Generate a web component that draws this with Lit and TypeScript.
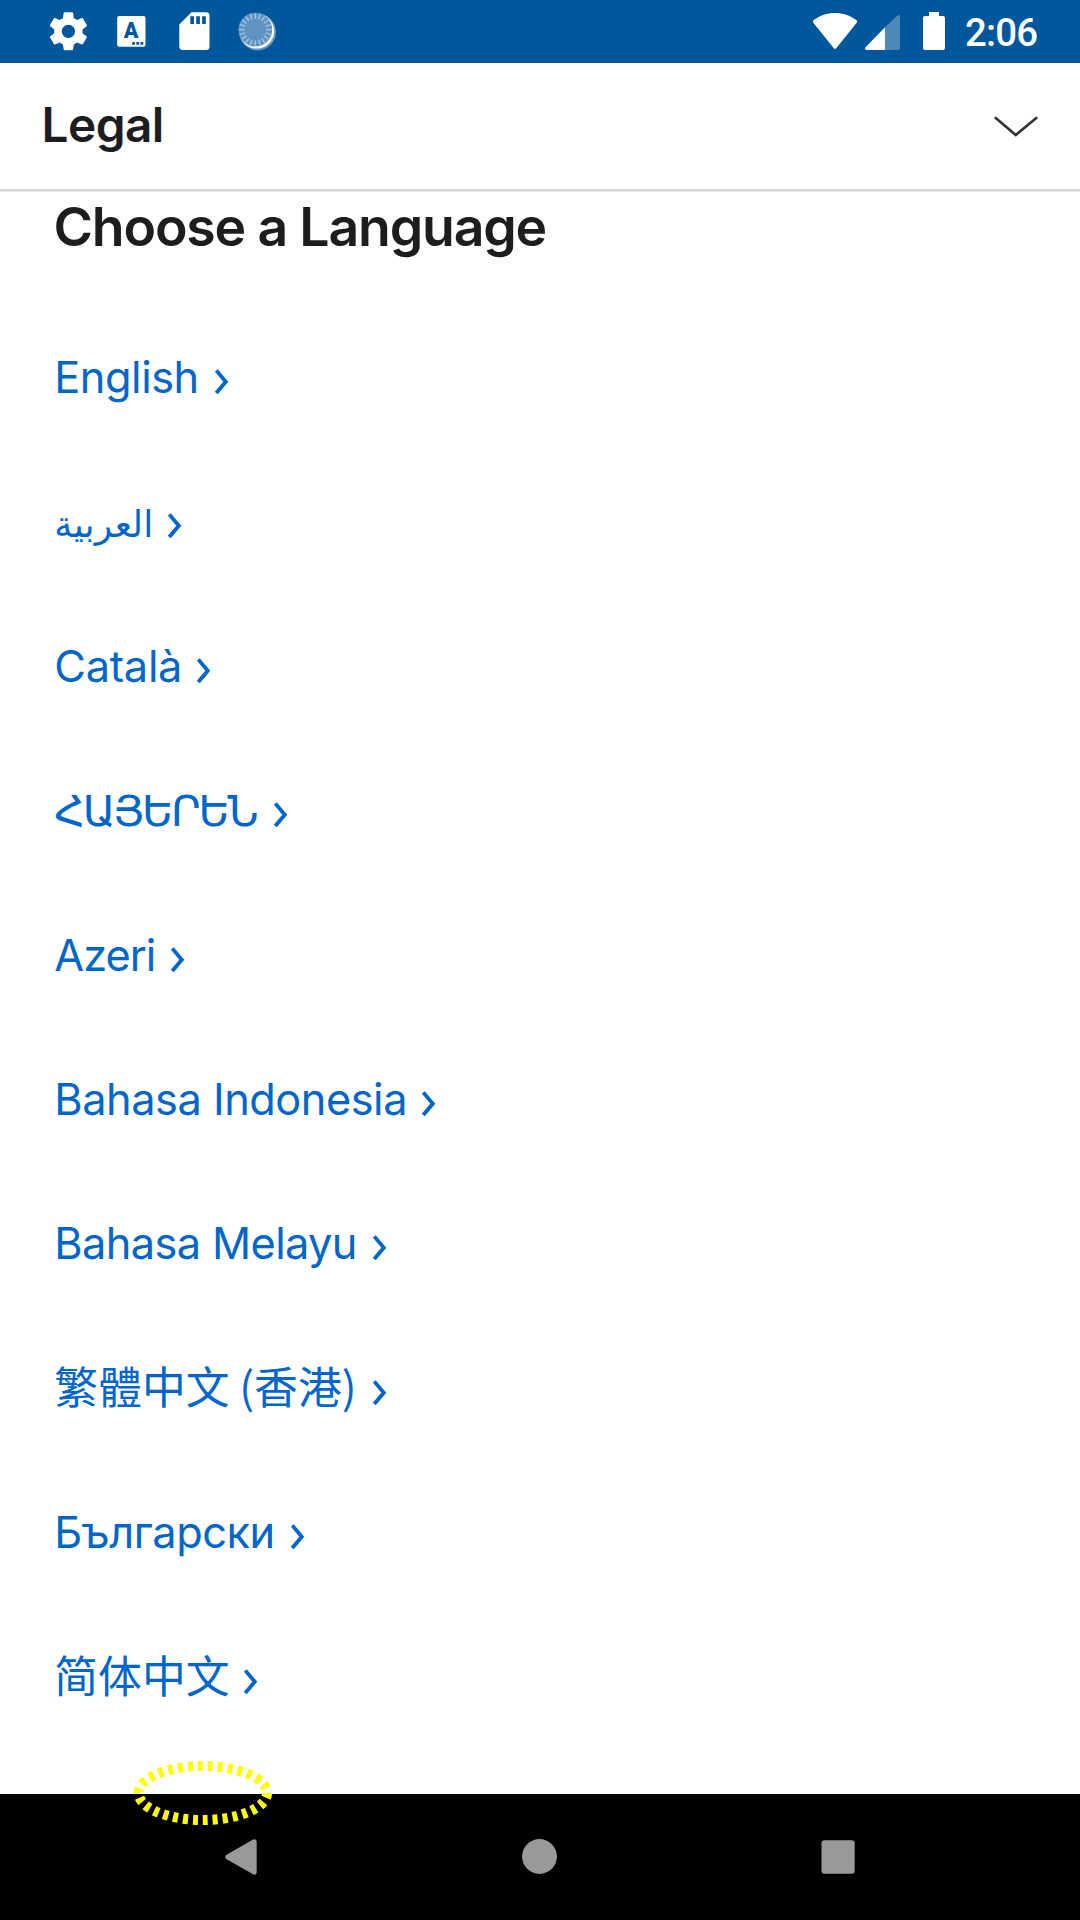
import { LitElement, html, svg, css } from "lit";
import { customElement, state } from "lit/decorators.js";
import { styleMap } from "lit/directives/style-map.js";

interface Language {
  label: string;
  lang: string;
  script: string;
  width: number;
  spacing: number;
}

const LANGUAGES: Language[] = [
  { label: "English", lang: "en", script: "latin", width: 146.7, spacing: -0.45 },
  { label: "العربية", lang: "ar", script: "arabic", width: 100, spacing: 0 },
  { label: "Català", lang: "ca", script: "latin", width: 128.7, spacing: -0.26 },
  { label: "ՀԱՅԵՐԵՆ", lang: "hy", script: "armenian", width: 205.4, spacing: -2.2 },
  { label: "Azeri", lang: "az", script: "latin", width: 103.2, spacing: -1 },
  { label: "Bahasa Indonesia", lang: "id", script: "latin", width: 353.7, spacing: -0.46 },
  { label: "Bahasa Melayu", lang: "ms", script: "latin", width: 304.4, spacing: -0.6 },
  { label: "繁體中文 (香港)", lang: "zh-HK", script: "traditional", width: 305, spacing: 0 },
  { label: "Български", lang: "bg", script: "latin", width: 222.7, spacing: -0.42 },
  { label: "简体中文", lang: "zh-CN", script: "simplified", width: 176.2, spacing: 0 },
];

@customElement("status-bar")
export class StatusBar extends LitElement {
  static styles = css`
    :host {
      display: block;
      height: 63px;
      background: #01579b;
    }
    .icons {
      display: block;
      width: 1080px;
      height: 63px;
    }
    .clock {
      font: 500 38.4px Roboto, sans-serif;
      fill: #fff;
    }
    .letter {
      font: 900 21.5px Roboto, sans-serif;
      fill: #01579b;
    }
  `;

  render() {
    const ticks = Array.from({ length: 20 }, (_, i) => i * 18);
    return html`
      <svg class="icons" viewBox="0 0 1080 63">
        <path
          transform="translate(45.6 8.5) scale(1.9)"
          fill="#fff"
          d="M19.43 12.98c.04-.32.07-.64.07-.98s-.03-.66-.07-.98l2.11-1.65c.19-.15.24-.42.12-.64l-2-3.46c-.12-.22-.39-.3-.61-.22l-2.49 1c-.52-.4-1.08-.73-1.69-.98l-.38-2.65C14.46 2.18 14.25 2 14 2h-4c-.25 0-.46.18-.49.42l-.38 2.65c-.61.25-1.17.59-1.69.98l-2.49-1c-.23-.09-.49 0-.61.22l-2 3.46c-.13.22-.07.49.12.64l2.11 1.65c-.04.32-.07.65-.07.98s.03.66.07.98l-2.11 1.65c-.19.15-.24.42-.12.64l2 3.46c.12.22.39.3.61.22l2.49-1c.52.4 1.08.73 1.69.98l.38 2.65c.03.24.24.42.49.42h4c.25 0 .46-.18.49-.42l.38-2.65c.61-.25 1.17-.59 1.69-.98l2.49 1c.23.09.49 0 .61-.22l2-3.46c.12-.22.07-.49-.12-.64l-2.11-1.65zM12 15.5c-1.93 0-3.5-1.57-3.5-3.5s1.57-3.5 3.5-3.5 3.5 1.57 3.5 3.5-1.57 3.5-3.5 3.5z"
        />
        <rect x="117.2" y="16" width="28.3" height="30.8" rx="2" fill="#fff" />
        <text class="letter" x="131.2" y="38.4" text-anchor="middle">A</text>
        <path fill="#01579b" d="M132.1 42h2.8v2.8h-2.8zM136.3 42h2.8v2.8h-2.8zM140.5 42h2.8v2.8h-2.8z" />
        <path
          fill="#fff"
          d="M191.5 12.3H206a3.5 3.5 0 0 1 3.5 3.5V46.6a3.5 3.5 0 0 1-3.5 3.5H182.8a3.5 3.5 0 0 1-3.5-3.5V24.5z"
        />
        <path fill="#01579b" d="M190.3 16.2h3.7v7.8h-3.7zM196.2 16.2h3.7v7.8h-3.7zM202.1 16.2h3.7v7.8h-3.7z" />
        <circle cx="257.6" cy="32" r="18.4" fill="#6699c5" />
        <circle cx="256.800" cy="31.200" r="17.4" fill="#fff" />
        <circle cx="255.3" cy="29.6" r="16.9" fill="#5f93c1" />
        ${ticks.map(
          (a) => svg`<path d="M255.3 13.4v5.400" stroke="#a3c2dc" stroke-width="1.5" transform="rotate(${a} 255.3 29.6)"/>`
        )}
        <path
          fill="#fff"
          d="M813.3 22.8q-1.2-1.5.4-2.8C820 15.4 827 13 835 13s15 2.4 21.3 7q1.6 1.3.4 2.8L836.4 48q-1.4 1.7-2.8 0z"
        />
        <path fill="#4d89b9" d="M885 27.200L897.2 15.7Q900 13.6 900 17V48q0 2-2 2H885z" />
        <path fill="#fff" d="M885 27.2V50H866.5q-2.5-.5-1-2.7z" />
        <path fill="#fff" d="M929 12h10v4h4q2 0 2 2V48q0 2-2 2H925q-2 0-2-2V18q0-2 2-2h4z" />
        <text class="clock" x="965" y="46.300" textLength="73" lengthAdjust="spacing">2:06</text>
      </svg>
    `;
  }
}

@customElement("legal-header")
export class LegalHeader extends LitElement {
  static styles = css`
    :host {
      box-sizing: border-box;
      height: 128px;
      padding: 0 42px 2px 41.5px;
      display: flex;
      align-items: center;
      justify-content: space-between;
      background: #fff;
      border-bottom: 2px solid #d6d6d6;
      box-shadow: 0 1px 0 #e6e6e6;
    }
    .title {
      font: 600 47.7px/60px Inter, sans-serif;
      letter-spacing: -0.5px;
      color: #1d1d1f;
    }
    .toggle {
      width: 44px;
      height: 22px;
      margin-top: 3px;
      fill: none;
      stroke: #333336;
      stroke-width: 2.7;
      stroke-linecap: round;
    }
  `;

  render() {
    return html`
      <span class="title">Legal</span>
      <svg class="toggle" viewBox="0 0 44 22"><path d="M1.7 2L21.8 19L42.3 2" /></svg>
    `;
  }
}

@customElement("language-link")
export class LanguageLink extends LitElement {
  static properties = { item: { attribute: false } };
  declare item: Language;

  static styles = css`
    :host {
      display: block;
      height: 144.4px;
      font: 43.3px/144.4px Inter, sans-serif;
      color: #0066cc;
      white-space: nowrap;
    }
    .label {
      display: inline-block;
      line-height: 1;
      text-align: left;
    }
    .arabic {
      font-family: "DejaVu Sans", sans-serif;
      font-size: 36.2px;
    }
    .armenian {
      font-family: "DejaVu Sans", sans-serif;
      font-size: 42.7px;
    }
    .traditional {
      font-family: "Noto Sans CJK TC", sans-serif;
      font-size: 43.8px;
    }
    .simplified {
      font-family: "Noto Sans CJK SC", sans-serif;
      font-size: 43.8px;
    }
    .more {
      width: 14px;
      height: 25px;
      margin-left: 14px;
      vertical-align: -1px;
      fill: none;
      stroke: currentColor;
      stroke-width: 3.8;
    }
  `;

  render() {
    const { label, lang, script, width, spacing } = this.item;
    return html`<bdi
        class="label ${script}"
        lang=${lang}
        style=${styleMap({ width: `${width}px`, letterSpacing: `${spacing}px` })}
        >${label}</bdi
      ><svg class="more" viewBox="0 0 14 25"><path d="M1.3 1.4L10.8 12.7L1.3 24" /></svg>`;
  }
}

@customElement("navigation-bar")
export class NavigationBar extends LitElement {
  static styles = css`
    :host {
      display: block;
      height: 126px;
      background: #000;
    }
    .keys {
      display: block;
      width: 1080px;
      height: 126px;
      fill: #999;
    }
  `;

  render() {
    return html`
      <svg class="keys" viewBox="0 0 1080 126">
        <path d="M226.2 61.1L252.6 45.8Q256.7 44 256.7 48V78Q256.7 82.2 252.6 80L226.2 64.9Q224.3 63 226.2 61.1z" />
        <circle cx="539.5" cy="62.5" r="17.4" />
        <rect x="821.5" y="46.3" width="33.2" height="33.4" rx="3" />
      </svg>
    `;
  }
}

@customElement("app-root")
export class AppRoot extends LitElement {
  @state() private languages = LANGUAGES;

  static styles = css`
    :host {
      position: relative;
      display: flex;
      flex-direction: column;
      height: 1920px;
      overflow: hidden;
      background: #fff;
    }
    .content {
      flex: 1;
      min-height: 0;
      overflow: hidden;
      padding: 3px 0 0 54.3px;
    }
    .heading {
      margin: 0 0 46px -0.8px;
      font: 600 53.6px/65px Inter, sans-serif;
      letter-spacing: -1.18px;
      color: #1d1d1f;
    }
    .focus {
      position: absolute;
      left: 130px;
      top: 1755px;
      width: 146px;
      height: 76px;
      fill: none;
      stroke: #ff0;
      stroke-width: 10;
    }
  `;

  render() {
    return html`
      <status-bar></status-bar>
      <legal-header></legal-header>
      <main class="content">
        <h1 class="heading">Choose a Language</h1>
        ${this.languages.map((item) => html`<language-link .item=${item}></language-link>`)}
      </main>
      <navigation-bar></navigation-bar>
      <svg class="focus" viewBox="0 0 146 76">
        <ellipse cx="72.8" cy="38" rx="64.3" ry="27" pathLength="300" stroke-dasharray="5 5" />
      </svg>
    `;
  }
}
